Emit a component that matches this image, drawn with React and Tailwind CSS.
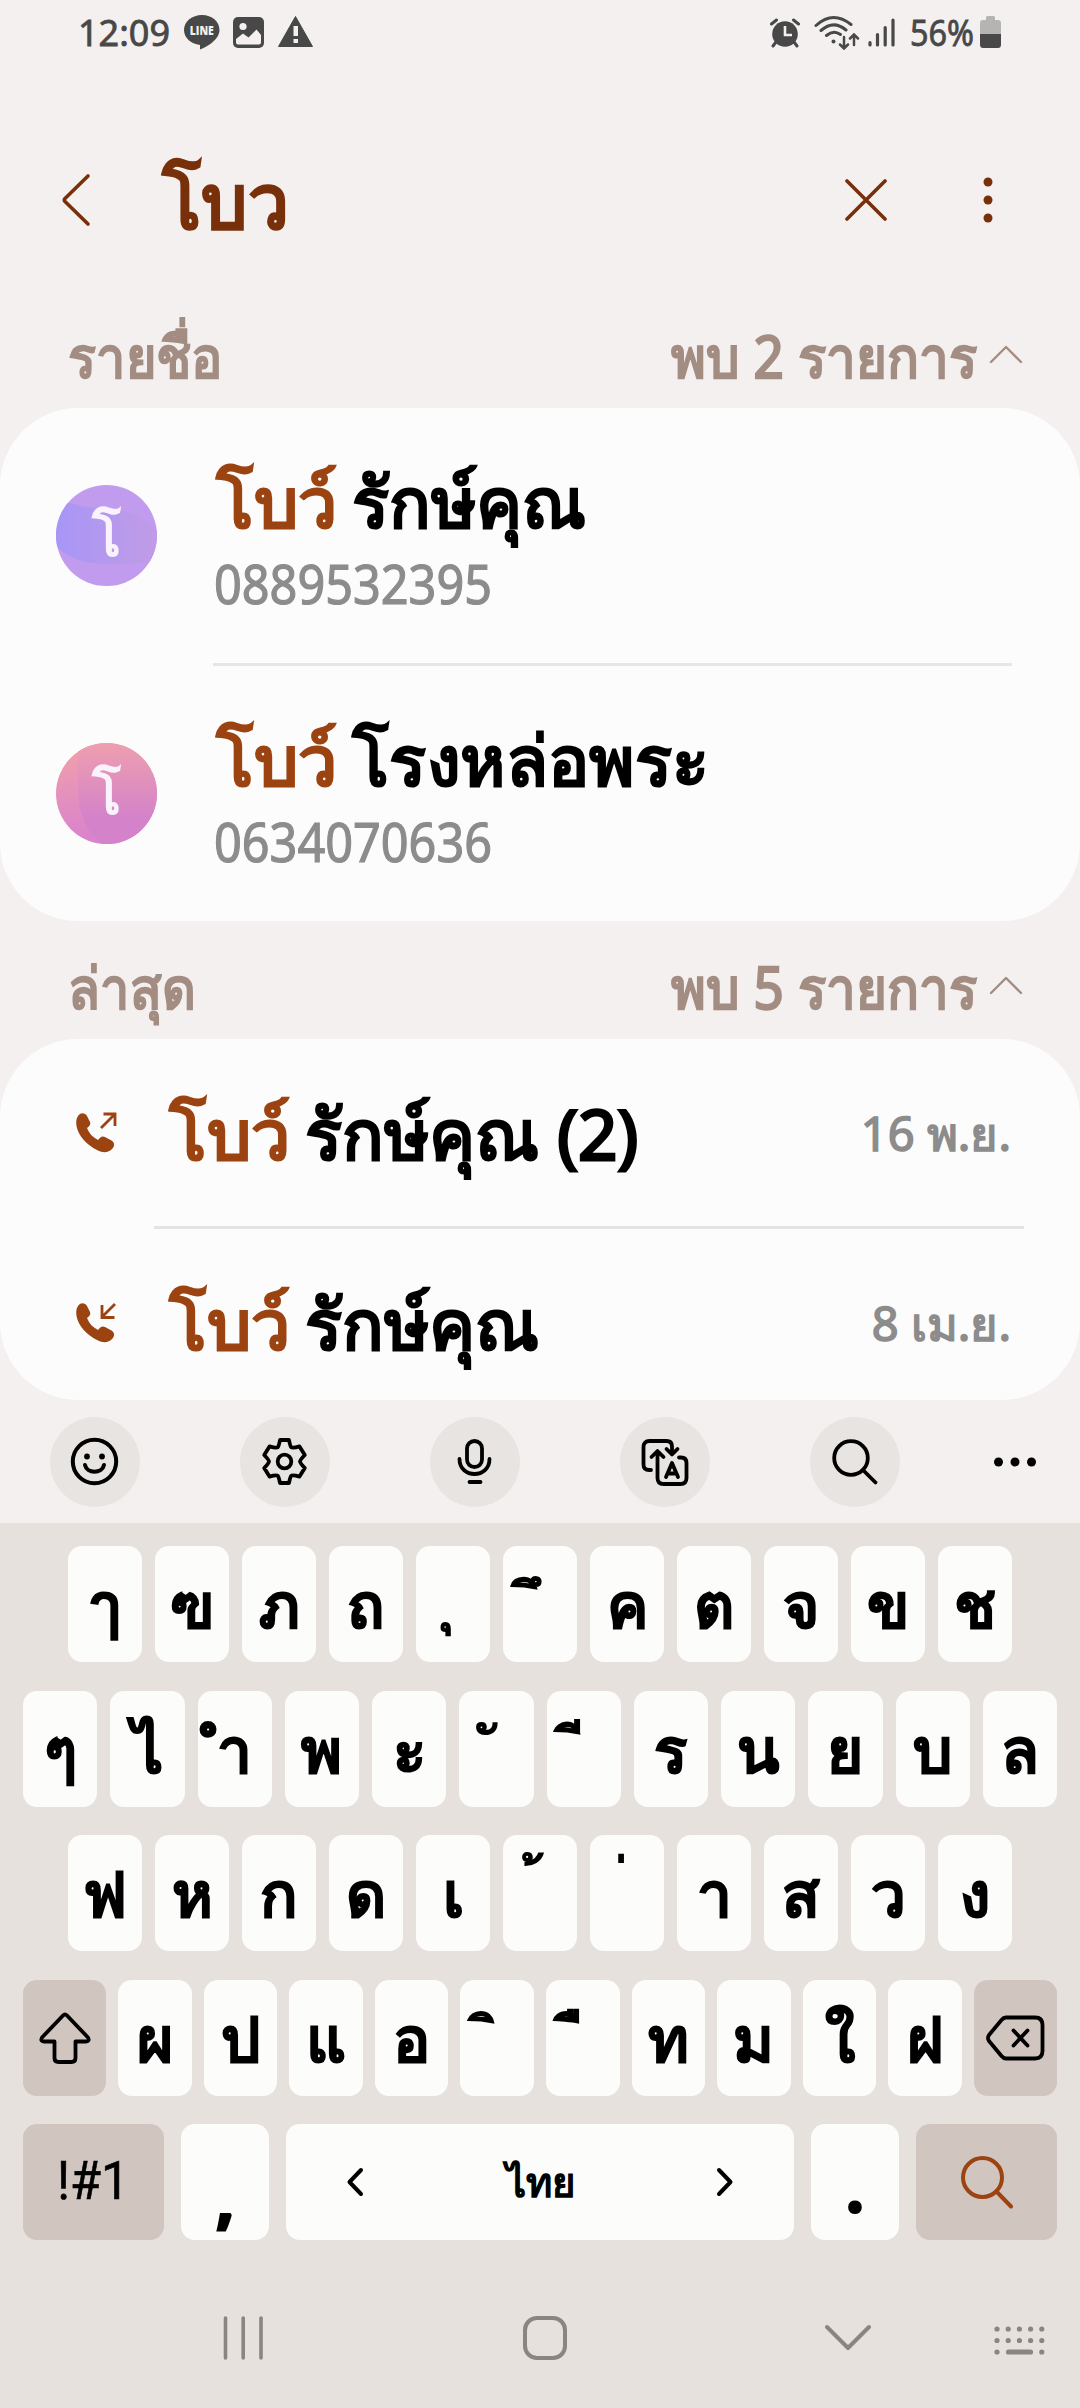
const CONTACTOS = [
  { nombre: 'รักษ์คุณ', telefono: '0889532395', avatar: 'purple' },
  { nombre: 'โรงหล่อพระ', telefono: '0634070636', avatar: 'pink' },
];

const LLAMADAS = [
  { nombre: 'รักษ์คุณ (2)', fecha: '16 พ.ย.', saliente: true },
  { nombre: 'รักษ์คุณ', fecha: '8 เม.ย.', saliente: false },
];

const FILA_1 = ['ๅ', 'ฃ', 'ภ', 'ถ', 'ุ', 'ึ', 'ค', 'ต', 'จ', 'ข', 'ช'];
const FILA_2 = ['ๆ', 'ไ', 'ำ', 'พ', 'ะ', 'ั', 'ี', 'ร', 'น', 'ย', 'บ', 'ล'];
const FILA_3 = ['ฟ', 'ห', 'ก', 'ด', 'เ', '้', '่', 'า', 'ส', 'ว', 'ง'];
const FILA_4 = ['ผ', 'ป', 'แ', 'อ', 'ิ', 'ื', 'ท', 'ม', 'ใ', 'ฝ'];

// Vocales y tonos sin ancho propio: necesitan un espacio como base
const MARCAS = ['ุ', 'ึ', 'ั', 'ี', '้', '่', 'ิ', 'ื'];

function StatusBar() {
  return (
    <div className="flex h-16 items-start pl-[78px] text-[#484848]">
      <span className="w-[106px] text-[36px] leading-[37px] pt-[14px] [-webkit-text-stroke:0.8px_currentColor]">12:09</span>
      <svg className="mt-[15px] h-[35px] w-[36px]" viewBox="0 0 36 35">
        <path d="M18 0C8 0 0 6.500 0 15c0 7.600 6.600 13.800 16 15v4.500c6-2.200 19.500-9.500 19.500-19.500C35.500 6.500 28 0 18 0z" fill="currentColor" />
        <text x="17.800" y="20" textAnchor="middle" textLength="24" lengthAdjust="spacingAndGlyphs" fontSize="11.500" fontWeight="800" fontFamily="Open Sans, sans-serif" fill="#f4f0ef">LINE</text>
      </svg>
      <svg className="mt-[17px] ml-[13px] h-[31px] w-[31px]" viewBox="0 0 31 31">
        <rect width="31" height="31" rx="5" fill="currentColor" />
        <circle cx="10" cy="9.500" r="3.600" fill="#f4f0ef" />
        <path d="M3 22l7-5.500 5.500 4 8-8 4.500 5.500v7.500q0 2-2 2H5q-2 0-2-2z" fill="#f4f0ef" />
      </svg>
      <svg className="mt-[16px] ml-[14px] h-[31px] w-[35px]" viewBox="0 0 35 31">
        <path d="M17.500 0.500L34.500 30.500H0.500z" fill="currentColor" stroke="currentColor" strokeLinejoin="round" />
        <path d="M15.500 10h4.500v10h-4.500zM15.500 23h4.500v4h-4.500z" fill="#f4f0ef" />
      </svg>
      <svg className="mt-[18px] ml-[457px] h-[30px] w-[30px]" viewBox="0 0 30 30">
        <circle cx="15" cy="16" r="12.800" fill="currentColor" />
        <path d="M1.500 6l5-4M28.500 6l-5-4M6 24l-3 4M24 24l3 4" stroke="currentColor" strokeWidth="3" strokeLinecap="round" />
        <path d="M15 8v9h7" fill="none" stroke="#f4f0ef" strokeWidth="2.600" />
      </svg>
      <svg className="mt-[15px] ml-[14px] h-[35px] w-[46px]" viewBox="0 0 46 35" fill="none" stroke="currentColor" strokeWidth="3" strokeLinecap="round">
        <path d="M2 10.500Q19 -5 37 9.500M7 15.500Q19.500 4.500 32 15M12.500 20.500Q19.500 14.500 26.500 19.500" />
        <circle cx="19.500" cy="26.500" r="2" fill="currentColor" stroke="none" />
        <path d="M30 22v11M26 29.500l4 4 4-4M40 30V19.500M36 23.500l4-4 4 4" strokeWidth="2.500" />
      </svg>
      <svg className="mt-[18px] ml-[7px] h-[29px] w-[29px]" viewBox="0 0 29 29" stroke="currentColor" strokeWidth="3.200" strokeLinecap="round">
        <path d="M3 24.500v2.500M10.500 16.500v10.500M18.200 9.500v17.500M26 2v25" />
      </svg>
      <span className="ml-[14px] w-[70px] text-[36px] leading-[37px] pt-[14px]"><span className="inline-block origin-left scale-x-[0.9] [-webkit-text-stroke:0.8px_currentColor]">56%</span></span>
      <svg className="mt-[16px] h-[32px] w-[21px]" viewBox="0 0 21 32">
        <path d="M6 1.500q0-1.500 1.500-1.500h6Q15 0 15 1.500V4h3q3 0 3 3v11H0V7q0-3 3-3h3z" fill="#b5b4b3" />
        <path d="M0 18h21v10.500q0 3.500-3 3.500H3q-3 0-3-3.500z" fill="currentColor" />
      </svg>
    </div>
  );
}

function SearchHeader() {
  return (
    <div className="flex h-[240px] items-center pt-8 pl-[60px] text-[#78300b]">
      <svg className="h-14 w-8" viewBox="0 0 32 56" fill="none" stroke="currentColor" strokeWidth="3.600" strokeLinecap="round" strokeLinejoin="round">
        <path d="M28 4L5 26.500q-1.500 1.500 0 3L28 52" />
      </svg>
      <div className="ml-[70px] w-[683px]">
        <h1 className="inline-block origin-left scale-x-[0.95] text-[77px] leading-[92px] [-webkit-text-stroke:3.4px_currentColor]">โบว</h1>
      </div>
      <svg className="h-[42px] w-[42px]" viewBox="0 0 42 42" stroke="currentColor" strokeWidth="3.600" strokeLinecap="round">
        <path d="M2 2l38 38M40 2L2 40" />
      </svg>
      <svg className="ml-[96px] h-12 w-[10px]" viewBox="0 0 10 48" fill="currentColor">
        <circle cx="5" cy="6" r="4.500" />
        <circle cx="5" cy="24" r="4.500" />
        <circle cx="5" cy="42" r="4.500" />
      </svg>
    </div>
  );
}

function SectionHeader({ titulo, total }) {
  return (
    <div className="flex h-[104px] items-center justify-between pr-[57px] pl-[68px] text-[58px] leading-[72px] text-[#a38d82] [-webkit-text-stroke:2.4px_currentColor]">
      <span className="origin-left scale-x-[0.9] whitespace-nowrap">{titulo}</span>
      <div className="flex items-center">
        <span className="origin-right scale-x-[0.913] whitespace-nowrap">พบ {total} รายการ</span>
        <svg className="mb-1 ml-3 h-5 w-[34px]" viewBox="0 0 34 20" fill="none" stroke="currentColor" strokeWidth="2.400" strokeLinecap="round" strokeLinejoin="round">
          <path d="M2 18L17 3l15 15" />
        </svg>
      </div>
    </div>
  );
}

function Avatar({ tipo }) {
  return (
    <div className="relative h-[101px] w-[101px] overflow-hidden rounded-full">
      {tipo === 'purple' ? (
        <svg className="h-full w-full" viewBox="0 0 101 101">
          <defs>
            <linearGradient id="violeta">
              <stop offset="0" stopColor="#a796f6" />
              <stop offset="1" stopColor="#c19be6" />
            </linearGradient>
          </defs>
          <rect width="101" height="101" fill="#c19bee" />
          <path d="M0 12Q16 22 45 23Q85 25 101 46V76Q85 79 50 79Q14 78 0 60z" fill="url(#violeta)" />
        </svg>
      ) : (
        <svg className="h-full w-full" viewBox="0 0 101 101">
          <defs>
            <linearGradient id="rosa" x1="0" y1="0" x2="0" y2="1">
              <stop offset="0" stopColor="#f2a1a9" />
              <stop offset="0.900" stopColor="#db84cb" />
            </linearGradient>
            <linearGradient id="rosa2" x1="0" y1="0" x2="0" y2="1">
              <stop offset="0" stopColor="#ee9fae" />
              <stop offset="0.750" stopColor="#d482ca" />
            </linearGradient>
          </defs>
          <rect width="101" height="101" fill="url(#rosa)" />
          <path d="M22 0H101V101H45Q22 80 22 48z" fill="url(#rosa2)" />
        </svg>
      )}
      <span className="absolute inset-0 flex items-center justify-center text-[54px] leading-[101px] text-[#faf3fd] [-webkit-text-stroke:1.8px_currentColor]">โ</span>
    </div>
  );
}

function Nombre({ children }) {
  return (
    <p className="text-[70px] leading-[84px] whitespace-nowrap text-black [-webkit-text-stroke:3px_currentColor]">
      <span className="mr-[2px] ml-[2px] inline-block w-[134px] origin-left text-[#9b4311]">โบว์</span>
      <span className="inline-block origin-left scale-x-[0.985]">{children}</span>
    </p>
  );
}

function IconoLlamada({ saliente }) {
  return (
    <svg className="h-[42px] w-[42px]" viewBox="0 0 42 42">
      <path d="M3 4C6 0 10 1 12 4l3 6c1 3-1 4.500-3 6 2 5.500 6 9.500 11 12 2-2.500 4-4.500 7-3l6.500 3.500c3 2 3.500 5 1 8-4 4.500-9.500 4.500-14.500 2C11 32.500 3.500 24 1.500 14 1 10 1 7 3 4z" fill="#9b4311" />
      {saliente ? (
        <path d="M26 16L39.500 2.500M28.500 2H40v12" fill="none" stroke="#9b4311" strokeWidth="2.800" />
      ) : (
        <path d="M40 2L27.500 14.500M27 3v12.500h12.500" fill="none" stroke="#9b4311" strokeWidth="2.800" />
      )}
    </svg>
  );
}

function Tecla({ children, className = 'flex-1' }) {
  const esMarca = MARCAS.includes(children);
  return (
    <div className={`flex h-[116px] items-center justify-center rounded-[14px] bg-[#fcfdfb] text-[62px] leading-[116px] text-black [-webkit-text-stroke:3px_currentColor] ${className}`}>
      {esMarca ? (
        <span className="pr-[14px] pb-2 text-[54px] whitespace-pre [-webkit-text-stroke:2px_currentColor]">{'\u00a0' + children}</span>
      ) : (
        children
      )}
    </div>
  );
}

function Toolbar() {
  return (
    <div className="flex h-[123px] items-center gap-[100px] pl-[50px] text-black">
      <div className="flex h-[90px] w-[90px] items-center justify-center rounded-full bg-[#e8e4e1]">
        <svg className="h-[50px] w-[50px]" viewBox="0 0 50 50" fill="none" stroke="currentColor" strokeWidth="4" strokeLinecap="round">
          <circle cx="24.500" cy="24.500" r="21.700" />
          <circle cx="17" cy="19.500" r="2.900" fill="currentColor" stroke="none" />
          <circle cx="32" cy="19.500" r="2.900" fill="currentColor" stroke="none" />
          <path d="M15 28c2 9 17 9 19 0" />
        </svg>
      </div>
      <div className="flex h-[90px] w-[90px] items-center justify-center rounded-full bg-[#e8e4e1]">
        <svg className="h-[50px] w-[50px]" viewBox="0 0 50 50" fill="none" stroke="currentColor" strokeWidth="3.800" strokeLinejoin="round">
          <circle cx="24.500" cy="24.500" r="6.800" />
          <path d="M20 3h9q1.200 6.200 2.200 7.200q1.500 1.200 8.300-.8l5.300 8.600q-4.800 5-4.800 6.500t4.800 6.500l-5.300 8.600q-6.800-2-8.300-.8q-1 1-2.200 7.200h-9q-1.200-6.200-2.200-7.200q-1.500-1.200-8.300.8l-5.300-8.600q4.800-5 4.800-6.500t-4.800-6.500l5.300-8.600q6.800 2 8.300.8q1-1 2.200-7.200z" />
        </svg>
      </div>
      <div className="flex h-[90px] w-[90px] items-center justify-center rounded-full bg-[#e8e4e1]">
        <svg className="h-[50px] w-[50px]" viewBox="0 0 50 50" fill="none" stroke="currentColor" strokeWidth="3.800" strokeLinecap="round">
          <rect x="17" y="4" width="15" height="26" rx="7.500" />
          <path d="M9.500 22c0 20 30 20 30 0M19.500 45h11" />
        </svg>
      </div>
      <div className="flex h-[90px] w-[90px] items-center justify-center rounded-full bg-[#e8e4e1]">
        <svg className="h-[50px] w-[50px]" viewBox="0 0 50 50" fill="none" stroke="currentColor" strokeWidth="3.800" strokeLinecap="round" strokeLinejoin="round">
          <path d="M11 33H9q-5.500 0-5.500-5.500V10Q3.500 4 9.500 4h17q5.500 0 5.500 5.500V17M26.500 12l5.500 5.500L37.500 12" />
          <path d="M11.500 20l6-6 6 6M17.500 15v26q0 6 6 6h17q6 0 6-6V26q0-5.500-5.500-5.500H39" />
          <path d="M26 40l6-14 6 14M28 36.500h8" />
        </svg>
      </div>
      <div className="flex h-[90px] w-[90px] items-center justify-center rounded-full bg-[#e8e4e1]">
        <svg className="h-[50px] w-[50px]" viewBox="0 0 50 50" fill="none" stroke="currentColor" strokeWidth="3.800" strokeLinecap="round">
          <circle cx="21" cy="21" r="16.800" />
          <path d="M33 33l12.500 12.500" />
        </svg>
      </div>
      <svg className="-ml-[7px] h-[10px] w-[44px]" viewBox="0 0 44 10" fill="currentColor">
        <circle cx="5.500" cy="5" r="4.500" />
        <circle cx="22" cy="5" r="4.500" />
        <circle cx="38.500" cy="5" r="4.500" />
      </svg>
    </div>
  );
}

function Keyboard() {
  return (
    <div className="flex flex-col gap-[28.5px] px-[23px] pt-[23px]">
      <div className="flex gap-[13px] px-[45px]">
        {FILA_1.map((t) => <Tecla key={t}>{t}</Tecla>)}
      </div>
      <div className="flex gap-[13px]">
        {FILA_2.map((t) => <Tecla key={t}>{t}</Tecla>)}
      </div>
      <div className="flex gap-[13px] px-[45px]">
        {FILA_3.map((t) => <Tecla key={t}>{t}</Tecla>)}
      </div>
      <div className="flex gap-[12px]">
        <div className="flex h-[116px] w-[83px] items-center justify-center rounded-[14px] bg-[#d0c5bf]">
          <svg className="h-[54px] w-[52px]" viewBox="0 0 52 54" fill="none" stroke="black" strokeWidth="3.800" strokeLinejoin="round">
            <path d="M24 4.500q2-2 4 0L49 26.500q2 4-2 4H36.500V47q0 4-4 4h-13q-4 0-4-4V30.500H5q-4 0-2-4z" />
          </svg>
        </div>
        {FILA_4.map((t) => <Tecla key={t}>{t}</Tecla>)}
        <div className="flex h-[116px] w-[83px] items-center justify-center rounded-[14px] bg-[#d0c5bf]">
          <svg className="h-[46px] w-[60px]" viewBox="0 0 60 46" fill="none" stroke="black" strokeWidth="3.800" strokeLinecap="round" strokeLinejoin="round">
            <path d="M21 2.500h29q7.500 0 7.500 7.500v26q0 7.500-7.500 7.500H21q-2.500 0-4.500-2.500L4 26q-2-3 0-6L16.500 5q2-2.500 4.500-2.500zM28.500 15.500l14 15M42.500 15.500l-14 15" />
          </svg>
        </div>
      </div>
      <div className="flex gap-[17px]">
        <div className="flex h-[116px] w-[141px] items-center justify-center rounded-[14px] bg-[#d0c5bf] font-['Roboto',sans-serif] text-[53px] [-webkit-text-stroke:0.6px_currentColor]">
          <span className="scale-x-[0.95]">!#1</span>
        </div>
        <Tecla className="w-[88px] pt-8 font-bold">,</Tecla>
        <div className="flex h-[116px] w-[508px] items-center justify-between rounded-[14px] bg-[#fcfdfb] px-[60px] text-[40px] leading-[116px] [-webkit-text-stroke:1.6px_currentColor]">
          <svg className="h-[30px] w-[18px]" viewBox="0 0 18 30" fill="none" stroke="black" strokeWidth="4" strokeLinecap="round" strokeLinejoin="round">
            <path d="M15 3L3.500 15 15 27" />
          </svg>
          <span>ไทย</span>
          <svg className="h-[30px] w-[18px]" viewBox="0 0 18 30" fill="none" stroke="black" strokeWidth="4" strokeLinecap="round" strokeLinejoin="round">
            <path d="M3 3l11.500 12L3 27" />
          </svg>
        </div>
        <Tecla className="w-[88px] pt-3 font-bold">.</Tecla>
        <div className="flex h-[116px] w-[141px] items-center justify-center rounded-[14px] bg-[#d0c5bf]">
          <svg className="h-[54px] w-[54px]" viewBox="0 0 54 54" fill="none" stroke="#9b4311" strokeWidth="4" strokeLinecap="round">
            <circle cx="22.500" cy="22.500" r="19.500" />
            <path d="M36.500 36.500l14.500 15" />
          </svg>
        </div>
      </div>
    </div>
  );
}

function NavBar() {
  return (
    <div className="flex h-[142px] items-center pt-[54px] pl-[222px] text-[#8a8581]">
      <svg className="h-[46px] w-[43px]" viewBox="0 0 43 46" stroke="currentColor" strokeWidth="3.600" strokeLinecap="round">
        <path d="M3.500 3v40M21.200 3v40M39 3v40" />
      </svg>
      <svg className="ml-[257px] h-[46px] w-[46px]" viewBox="0 0 46 46" fill="none" stroke="currentColor" strokeWidth="4">
        <rect x="3" y="3" width="40" height="40" rx="12" />
      </svg>
      <svg className="ml-[256px] h-[28px] w-[48px]" viewBox="0 0 48 28" fill="none" stroke="currentColor" strokeWidth="4" strokeLinecap="round" strokeLinejoin="round">
        <path d="M3 3l21 21L45 3" />
      </svg>
      <svg className="mt-[6px] ml-[121px] h-[32px] w-[54px]" viewBox="0 0 54 32" stroke="currentColor" strokeWidth="5.200" strokeLinecap="round">
        <path d="M4 4h.01M15.200 4h.01M26.400 4h.01M37.600 4h.01M48.800 4h.01M4 15.500h.01M15.200 15.500h.01M26.400 15.500h.01M37.600 15.500h.01M48.800 15.500h.01M4 27h.01M15.500 27h22M48.800 27h.01" />
      </svg>
    </div>
  );
}

export default function App() {
  return (
    <div className="flex h-[2408px] w-[1080px] flex-col overflow-hidden bg-[#f4f0ef] font-['Noto_Sans',sans-serif]">
      <StatusBar />
      <SearchHeader />

      <SectionHeader titulo="รายชื่อ" total={2} />
      <div className="rounded-[78px] bg-[#fcfcfc]">
        {CONTACTOS.map((c, i) => (
          <div key={c.telefono}>
            {i > 0 && <div className="mr-[68px] ml-[213px] h-[3px] bg-[#e6e6e6]" />}
            <div className="flex h-[255px] items-center pl-[56px]">
              <Avatar tipo={c.avatar} />
              <div className="ml-[57px]">
                <Nombre>{c.nombre}</Nombre>
                <p className="mt-[10px] origin-left scale-x-[0.9] text-[54px] leading-[60px] text-[#8c8c8c] [-webkit-text-stroke:1.2px_currentColor]">{c.telefono}</p>
              </div>
            </div>
          </div>
        ))}
      </div>

      <div className="pt-[14px]">
        <SectionHeader titulo="ล่าสุด" total={5} />
      </div>
      <div className="h-[361px] overflow-hidden rounded-[78px] bg-[#fcfcfc]">
        {LLAMADAS.map((l, i) => (
          <div key={l.fecha}>
            {i > 0 && <div className="mr-[56px] ml-[154px] h-[3px] bg-[#e3e3e3]" />}
            <div className="flex h-[187px] items-center pr-[69px] pl-[75px]">
              <IconoLlamada saliente={l.saliente} />
              <div className="ml-[50px] flex-1">
                <Nombre>{l.nombre}</Nombre>
              </div>
              <span className="text-[47px] leading-[60px] whitespace-nowrap text-[#8c8c8c] [-webkit-text-stroke:1.6px_currentColor]">{l.fecha}</span>
            </div>
          </div>
        ))}
      </div>

      <Toolbar />
      <div className="flex-1 bg-[#e6e1dd]">
        <Keyboard />
        <NavBar />
      </div>
    </div>
  );
}
